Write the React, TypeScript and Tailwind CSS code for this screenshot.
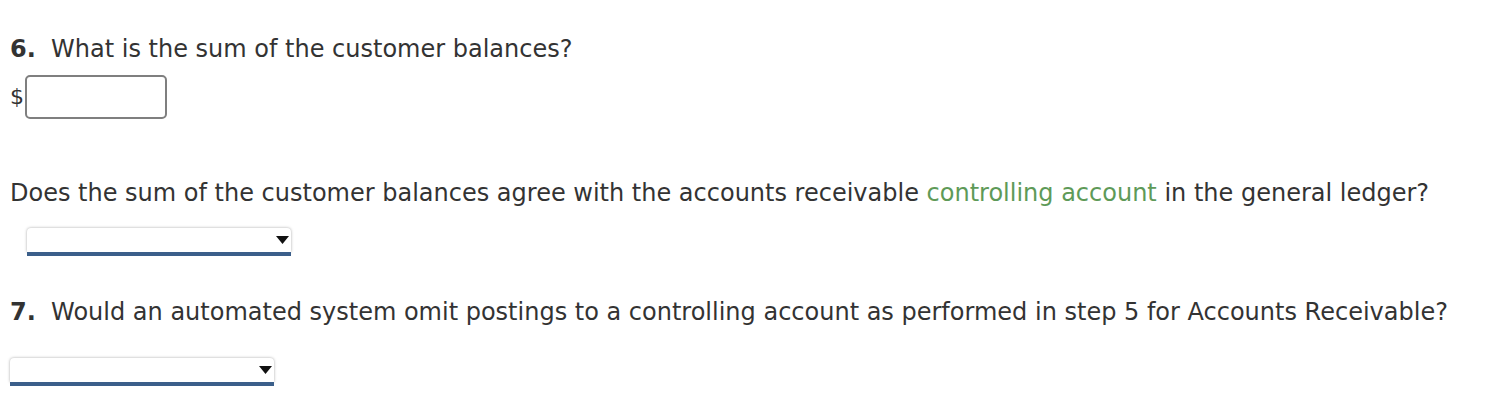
import React from 'react'

function Select({ className }: { className: string }) {
  return (
    <div className={`relative h-[28px] w-[264px] ${className}`}>
      <div className="h-[24px] w-full rounded-t-[4px] bg-white shadow-[0_0_3px_rgba(0,0,0,0.35)]" />
      <div className="h-[4px] w-full bg-[#3b5f8a]" />
      <svg className="absolute right-[2px] top-[8px]" width="13" height="8" viewBox="0 0 13 8">
        <path d="M0 0 L13 0 L6.5 8 Z" fill="#111" />
      </svg>
    </div>
  )
}

export default function App() {
  return (
    <div className="h-[410px] w-[1496px] bg-white font-['DejaVu_Sans',Verdana,sans-serif] text-[24px] text-[#333]">
      <div className="px-[10px] pt-[35px]">
        <p className="leading-[28px]">
          <span className="font-bold">6.</span>&nbsp; What is the sum of the customer balances?
        </p>
        <div className="mt-[12px] flex items-center">
          <span className="text-[22px] leading-[26px]">$</span>
          <div className="ml-[1px] h-[44px] w-[142px] rounded-[5px] border-2 border-[#7f7f7f] bg-white" />
        </div>
        <p className="mt-[60px] leading-[28px]">
          Does the sum of the customer balances agree with the accounts receivable{' '}
          <span className="text-[#5e9a58]">controlling account</span> in the general ledger?
        </p>
        <Select className="ml-[17px] mt-[21px]" />
        <p className="mt-[42px] leading-[28px]">
          <span className="font-bold">7.</span>&nbsp; Would an automated system omit postings to a controlling account as performed in step 5 for Accounts Receivable?
        </p>
        <Select className="mt-[32px]" />
      </div>
    </div>
  )
}
